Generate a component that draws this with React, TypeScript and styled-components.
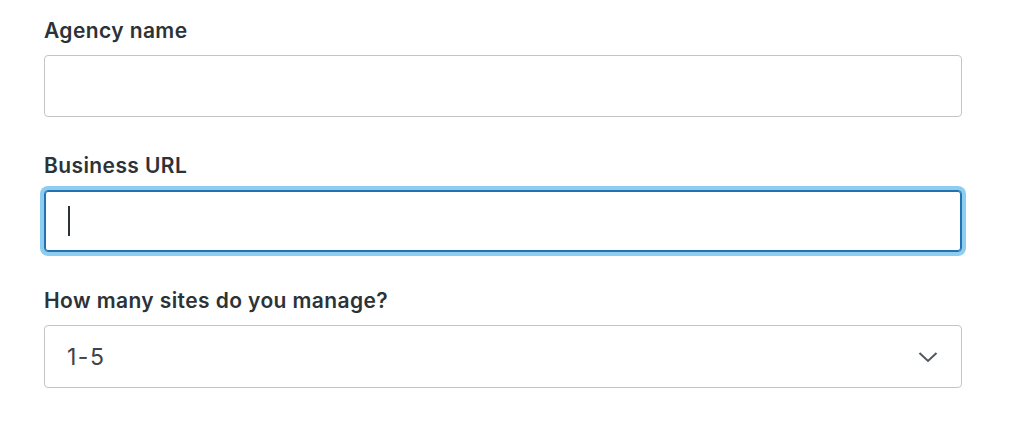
import React from "react";
import styled, { createGlobalStyle } from "styled-components";

const Global = createGlobalStyle`
  html, body { margin: 0; padding: 0; background: #ffffff; }
  body { font-family: Inter, "Liberation Sans", sans-serif; }
`;

const Form = styled.form`
  display: flex;
  flex-direction: column;
  gap: 37px;
  width: 918px;
  padding: 19px 0 0 44px;
`;

const Field = styled.div`
  display: flex;
  flex-direction: column;
  gap: 12px;
`;

const Label = styled.label`
  font-size: 21px;
  font-weight: 600;
  line-height: 24px;
  letter-spacing: 0.4px;
  color: #2c3338;
`;

const TextInput = styled.input`
  box-sizing: border-box;
  height: 62px;
  width: 100%;
  margin: 0;
  padding: 0 22px;
  font-family: inherit;
  font-size: 22px;
  color: #3c434a;
  background: #fff;
  border: 1px solid #c3c4c7;
  border-radius: 4px;
  outline: none;
`;

const FocusedBox = styled.div`
  box-sizing: border-box;
  height: 62px;
  width: 100%;
  display: flex;
  align-items: center;
  padding: 0 23px;
  border: 1px solid #2271b1;
  border-radius: 4px;
  box-shadow: inset 0 0 0 1px #2271b1, 0 0 0 4px #8dcdf0;
  background: #fff;
`;

const Caret = styled.span`
  display: inline-block;
  width: 2px;
  height: 30px;
  background: #2c3338;
`;

const SelectBox = styled.div`
  box-sizing: border-box;
  height: 63px;
  width: 100%;
  display: flex;
  align-items: center;
  justify-content: space-between;
  padding: 0 22px;
  border: 1px solid #c3c4c7;
  border-radius: 4px;
  background: #fff;
  font-size: 23px;
  letter-spacing: 1.5px;
  color: #3c434a;
`;

const Chevron = styled.svg`
  width: 22px;
  height: 14px;
`;

export default function App() {
  return (
    <>
      <Global />
      <Form onSubmit={(e) => e.preventDefault()}>
        <Field>
          <Label htmlFor="agency">Agency name</Label>
          <TextInput id="agency" type="text" />
        </Field>
        <Field>
          <Label>Business URL</Label>
          <FocusedBox>
            <Caret />
          </FocusedBox>
        </Field>
        <Field>
          <Label>How many sites do you manage?</Label>
          <SelectBox>
            <span>1-5</span>
            <Chevron viewBox="0 0 22 14" fill="none">
              <path d="M2.5 3 L11 11 L19.5 3" stroke="#50575e" strokeWidth="2" />
            </Chevron>
          </SelectBox>
        </Field>
      </Form>
    </>
  );
}
